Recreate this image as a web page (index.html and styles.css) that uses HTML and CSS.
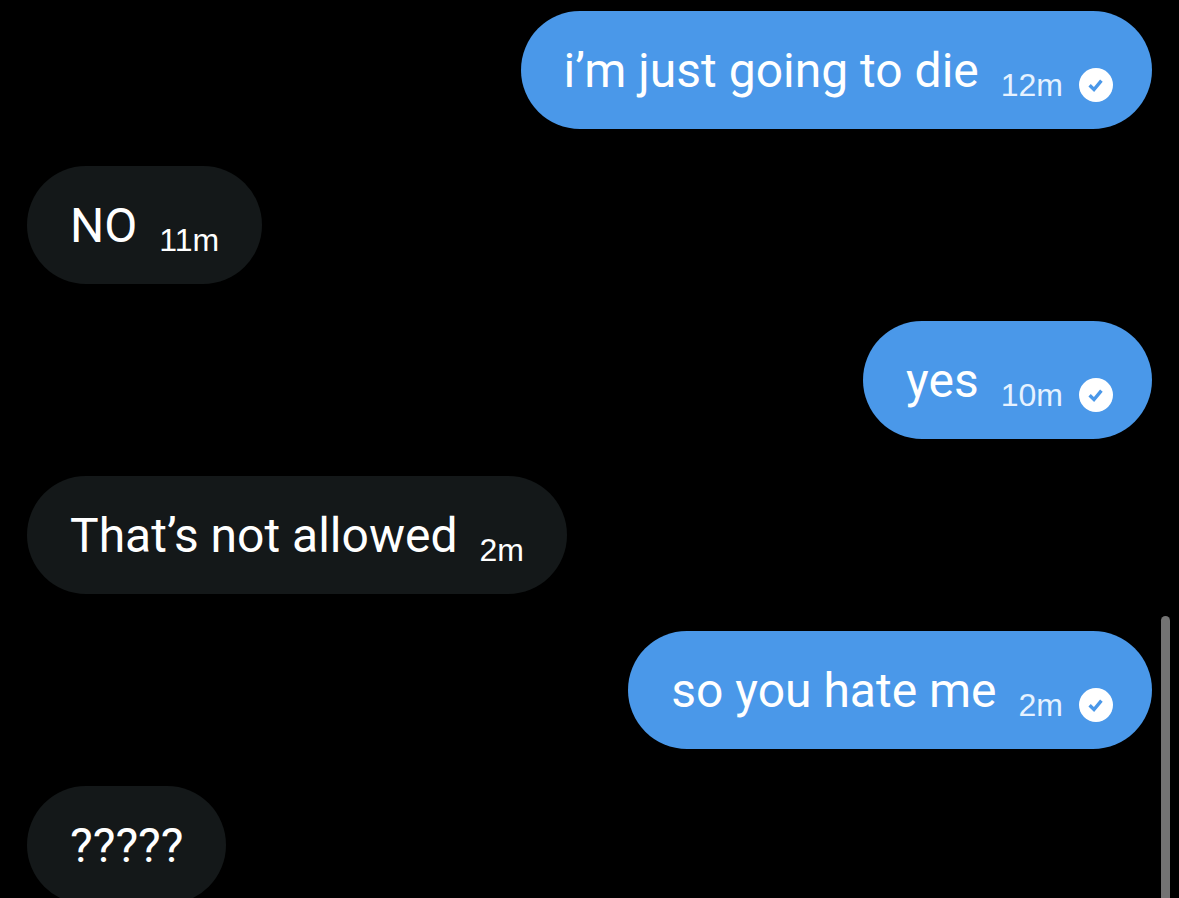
FILE: index.html
```
<!DOCTYPE html>
<html lang="en">
<head>
  <meta charset="UTF-8">
  <title>Messages</title>
  <meta name="viewport" content="width=device-width, initial-scale=1.0">
  <link rel="stylesheet" href="styles.css">
</head>
<body>
  <!-- Delivered badge, shared by all sent messages -->
  <svg class="sprite" aria-hidden="true">
    <symbol id="delivered" viewBox="0 0 34 34">
      <circle cx="17" cy="17" r="17" fill="#fff"/>
      <path d="M10.6 17.3l4.4 4.2 7.4-8.8" fill="none" stroke="#4a98e9" stroke-width="3.4"/>
    </symbol>
  </svg>

  <main class="chat">
    <div class="bubble sent">
      <p class="text">i’m just going to die</p>
      <div class="meta">
        <time>12m</time>
        <svg class="check" role="img" aria-label="Delivered"><use href="#delivered"/></svg>
      </div>
    </div>

    <div class="bubble received">
      <p class="text">NO</p>
      <div class="meta"><time>11m</time></div>
    </div>

    <div class="bubble sent">
      <p class="text">yes</p>
      <div class="meta">
        <time>10m</time>
        <svg class="check" role="img" aria-label="Delivered"><use href="#delivered"/></svg>
      </div>
    </div>

    <div class="bubble received">
      <p class="text">That’s not allowed</p>
      <div class="meta"><time>2m</time></div>
    </div>

    <div class="bubble sent">
      <p class="text">so you hate me</p>
      <div class="meta">
        <time>2m</time>
        <svg class="check" role="img" aria-label="Delivered"><use href="#delivered"/></svg>
      </div>
    </div>

    <div class="bubble received">
      <p class="text">?????</p>
    </div>

    <div class="scroll-thumb"></div>
  </main>
</body>
</html>
```
FILE: styles.css
```
* {
  box-sizing: border-box;
}

body {
  margin: 0;
  background: #000;
  color: #fff;
  font-family: Roboto, "Liberation Sans", sans-serif;
}

.sprite {
  display: none;
}

.chat {
  position: relative;
  display: flex;
  flex-direction: column;
  gap: 37px;
  height: 100vh;
  padding: 11px 27px 0;
  overflow: hidden;
}

.bubble {
  display: flex;
  flex-shrink: 0;
  align-items: flex-end;
  gap: 22px;
  max-width: 85%;
  padding: 32px 43px 24px;
  border-radius: 59px;
}

.sent {
  align-self: flex-end;
  padding-right: 39px;
  background: #4a98e9;
}

.received {
  align-self: flex-start;
  background: #141819;
}

.text {
  margin: 0 0 6px;
  font-size: 48px;
  line-height: 56px;
}

.meta {
  display: flex;
  align-items: center;
  gap: 16px;
  font-family: "Liberation Sans", Arial, sans-serif;
  font-size: 32px;
  line-height: 40px;
}

.sent .meta {
  color: #e6f2ff;
}

.check {
  width: 34px;
  height: 34px;
}

/* Scroll indicator over the right edge */
.scroll-thumb {
  position: absolute;
  right: 9px;
  bottom: -10px;
  width: 9px;
  height: 292px;
  border-radius: 5px;
  background: #737373;
}
```
